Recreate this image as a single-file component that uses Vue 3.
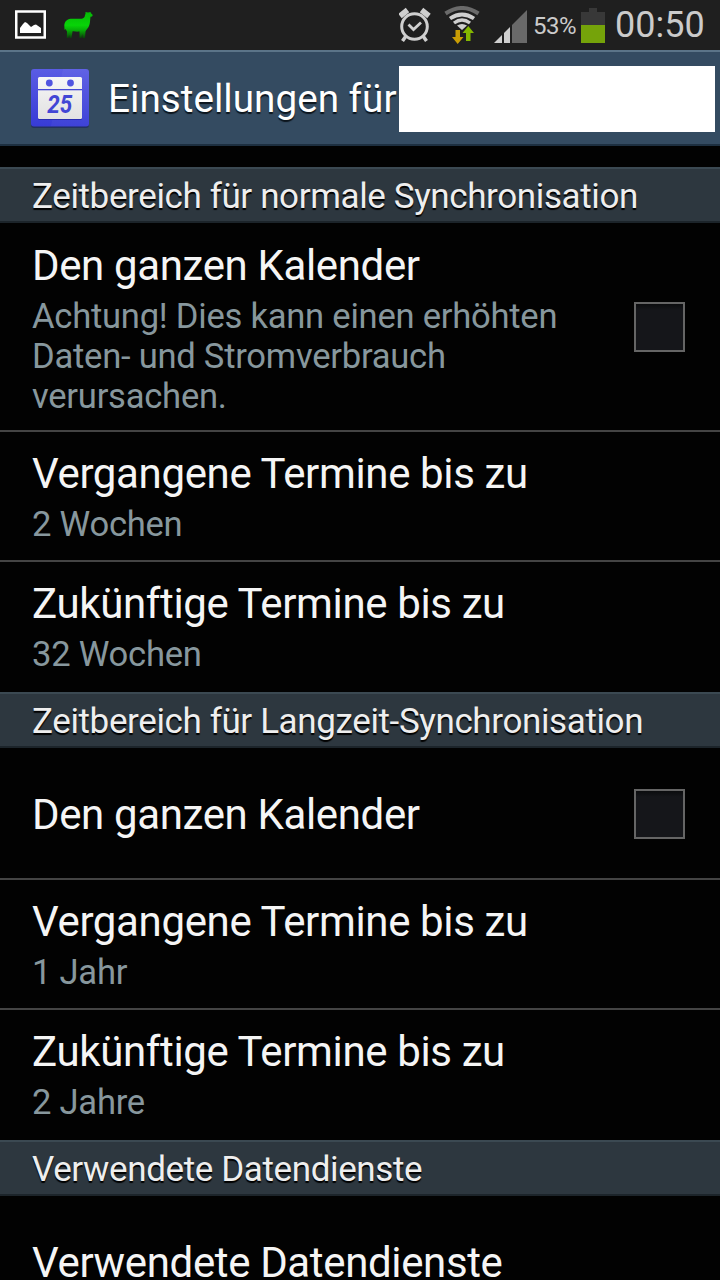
<template>
  <div class="screen">
    <div class="status-bar">
      <div class="status-left">
        <svg class="picture-icon" width="32" height="30" viewBox="0 0 32 30">
          <rect x="1.25" y="1.5" width="28.5" height="26" fill="none" stroke="#fff" stroke-width="2.5" />
          <path d="M5 23V18L8 14l2-2 2 1 4 4 3-2 2-.5 5 3.500v5z" fill="#fff" />
        </svg>
        <svg class="llama-icon" width="30" height="28" viewBox="0 0 30 28">
          <defs>
            <linearGradient id="llama" x1="0" y1="0" x2="0" y2="1">
              <stop offset="0" stop-color="#06b806" />
              <stop offset=".5" stop-color="#08d408" />
              <stop offset=".7" stop-color="#07a807" />
              <stop offset="1" stop-color="#0a3a0a" />
            </linearGradient>
          </defs>
          <path
            d="M21.500 1L24 1.500 26.500 1 27 2.200 28.800 4 28 5.500 26.500 5.800C26 8.500 26.300 12 25 15 24 17.500 22 18.500 21.500 20.500L21 27 18.500 27.500 18.300 23 17.500 27 15.500 27 15.500 20.500C12 21 10 20 8.500 20.500L7.500 27 5.500 27 5.200 24 4.500 27 2.800 27 3 20.500 1.500 18 .5 19 .3 14C1 9.500 4 7.800 8 7.800 12 7.500 17 8.500 19.500 7 21.500 5.500 20.500 4 21.500 3z"
            fill="url(#llama)"
          />
        </svg>
      </div>
      <div class="status-right">
        <svg class="alarm-icon" width="34" height="36" viewBox="0 0 34 36">
          <g fill="none" stroke="#cfcfcf">
            <circle cx="15.500" cy="19.500" r="12.800" stroke-width="3" />
            <path d="M9.500 17.500l5 5 7.500-7" stroke-width="2.800" />
            <path d="M1 9l7.500-6M30 9l-7.500-6" stroke-width="5.500" />
            <path d="M7 29l-3.500 5M24 29l3.500 5" stroke-width="3.500" />
          </g>
        </svg>
        <svg class="wifi-icon" width="36" height="38" viewBox="0 0 36 38">
          <g fill="none">
            <path d="M1.500 7.500Q18-3.500 34.500 7.500" stroke="#6a6a6a" stroke-width="4" />
            <path d="M6 12.500Q18 4.500 30 12.500" stroke="#cfcfcf" stroke-width="3.800" />
            <path d="M10 17Q18 11 26 17" stroke="#cfcfcf" stroke-width="3.400" />
          </g>
          <path d="M13 19.500q5-3 10 0L18 24z" fill="#cfcfcf" />
          <path d="M11.500 24h4.500v7h3.500L13.700 38 8 31h3.500z" fill="#c99d05" />
          <path d="M22 35h4.500v-8H30l-5.700-7L18.500 27H22z" fill="#84b800" />
        </svg>
        <svg class="signal-icon" width="33" height="34" viewBox="0 0 33 34">
          <path d="M0 33L8 25v8z" fill="#cfcfcf" />
          <path d="M10 23l6-6v16h-6z" fill="#cfcfcf" />
          <path d="M18 15L33 0v33H18z" fill="#696969" />
        </svg>
        <span class="percent">53%</span>
        <div class="battery">
          <div class="battery-cap"></div>
          <div class="battery-body">
            <div class="battery-level"></div>
          </div>
        </div>
        <span class="clock">00:50</span>
      </div>
    </div>

    <div class="action-bar">
      <svg class="app-icon" width="60" height="60" viewBox="0 0 60 60">
        <defs>
          <linearGradient id="tile" x1="0" y1="0" x2="0" y2="1">
            <stop offset="0" stop-color="#5a5ce4" />
            <stop offset="1" stop-color="#373bd6" />
          </linearGradient>
          <linearGradient id="sheet" x1="0" y1="0" x2="0" y2="1">
            <stop offset="0" stop-color="#f6f6f6" />
            <stop offset="1" stop-color="#e2e2e2" />
          </linearGradient>
        </defs>
        <rect x="1" y="1" width="58" height="58" rx="3" fill="#24325e" />
        <rect x="1" y="0" width="58" height="57.500" rx="3" fill="url(#tile)" />
        <path d="M33 0h23q3 0 3 3v54H21z" fill="#fff" opacity=".04" />
        <rect x="8" y="9" width="44" height="42" rx="1.500" fill="#292db2" />
        <rect x="8" y="8" width="44" height="42" rx="1.500" fill="url(#sheet)" />
        <rect x="8" y="20" width="44" height="1.300" fill="#4549d4" />
        <circle cx="19.300" cy="14" r="3.400" fill="#5054e0" />
        <circle cx="40.500" cy="14" r="3.400" fill="#5054e0" />
        <text x="29.800" y="44" text-anchor="middle" textLength="25" lengthAdjust="spacingAndGlyphs" class="app-day">25</text>
      </svg>
      <h1>Einstellungen für</h1>
      <div class="account"></div>
    </div>

    <div class="settings">
      <section v-for="section in sections" :key="section.title">
        <h2>{{ section.title }}</h2>
        <div
          v-for="item in section.items"
          :key="item.title"
          class="row"
          :class="{ single: !item.summary }"
        >
          <div class="texts">
            <div class="title">{{ item.title }}</div>
            <div v-if="item.summary" class="summary">{{ item.summary }}</div>
          </div>
          <button
            v-if="'checked' in item"
            class="checkbox"
            :aria-pressed="item.checked"
            @click="item.checked = !item.checked"
          >
            <svg v-if="item.checked" width="46" height="44" viewBox="0 0 46 44">
              <path d="M8 22l11 12L38 8" fill="none" stroke="#7fb800" stroke-width="6" />
            </svg>
          </button>
        </div>
      </section>
    </div>
  </div>
</template>

<script setup>
import { ref } from "vue";

const sections = ref([
  {
    title: "Zeitbereich für normale Synchronisation",
    items: [
      {
        title: "Den ganzen Kalender",
        summary: "Achtung! Dies kann einen erhöhten Daten- und Stromverbrauch verursachen.",
        checked: false,
      },
      { title: "Vergangene Termine bis zu", summary: "2 Wochen" },
      { title: "Zukünftige Termine bis zu", summary: "32 Wochen" },
    ],
  },
  {
    title: "Zeitbereich für Langzeit-Synchronisation",
    items: [
      { title: "Den ganzen Kalender", checked: false },
      { title: "Vergangene Termine bis zu", summary: "1 Jahr" },
      { title: "Zukünftige Termine bis zu", summary: "2 Jahre" },
    ],
  },
  {
    title: "Verwendete Datendienste",
    items: [{ title: "Verwendete Datendienste" }],
  },
]);
</script>

<style>
body {
  background: #000;
  overflow: hidden;
}
</style>

<style scoped>
.screen {
  width: 720px;
  height: 1280px;
  overflow: hidden;
  display: flex;
  flex-direction: column;
  background: #020202;
  color: #f5f5f5;
  font-family: Roboto, sans-serif;
}

.status-bar {
  height: 50px;
  flex: none;
  display: flex;
  justify-content: space-between;
  background: #1f1f1f;
  color: #cbcbcb;
}

.status-left,
.status-right {
  display: flex;
  align-items: flex-start;
}

.picture-icon {
  margin: 10px 0 0 15px;
}

.llama-icon {
  margin: 11px 0 0 17px;
}

.alarm-icon {
  margin: 7px -1px 0 0;
}

.wifi-icon {
  margin: 6px 0 0 12px;
}

.signal-icon {
  margin: 10px 0 0 14px;
}

.percent {
  width: 48px;
  margin-left: 6px;
  font-size: 24px;
  letter-spacing: -0.5px;
  line-height: 52px;
}

.battery {
  width: 24px;
  margin-top: 8px;
}

.battery-cap {
  width: 8px;
  height: 4px;
  margin: 0 auto;
  background: #383838;
}

.battery-body {
  height: 31px;
  display: flex;
  align-items: flex-end;
  background: #383838;
}

.battery-level {
  width: 100%;
  height: 18px;
  background: #75a30a;
}

.clock {
  width: 105px;
  margin-left: 10px;
  font-size: 36px;
  line-height: 50px;
}

.action-bar {
  height: 96px;
  flex: none;
  box-sizing: border-box;
  display: flex;
  align-items: center;
  padding: 2px 5px 0 30px;
  background: #344b61;
  border-top: 2px solid #5b7488;
  border-bottom: 2px solid #1d2f40;
}

.app-day {
  font-family: Roboto, sans-serif;
  font-size: 25px;
  font-weight: 700;
  font-style: italic;
  fill: #4246d5;
}

h1 {
  width: 291px;
  margin: 0 0 0 18px;
  font-size: 38.7px;
  font-weight: 400;
  line-height: 50px;
  white-space: nowrap;
  color: #fff;
  text-shadow: 0 2px 1px #0c151d;
}

.account {
  flex: 1;
  height: 66px;
  background: #fff;
}

.settings {
  padding-top: 21px;
}

h2 {
  height: 56px;
  box-sizing: border-box;
  margin: 0;
  padding: 1px 0 0 32px;
  border-top: 2px solid #3b4952;
  border-bottom: 2px solid #1c242a;
  background: #2d373f;
  font-size: 35px;
  font-weight: 400;
  letter-spacing: -0.38px;
  line-height: 54px;
  white-space: nowrap;
  color: #eee;
  text-shadow: 0 2px 1px #000;
}

.row {
  min-height: 130px;
  box-sizing: border-box;
  display: flex;
  align-items: center;
  padding: 18px 35px 14px 32px;
}

.row + .row {
  padding-top: 17px;
}

.row:not(:last-child) {
  border-bottom: 2px solid #444;
}

.row.single {
  min-height: 132px;
  align-items: flex-start;
  padding-top: 41px;
}

.texts {
  flex: 1;
  align-self: flex-start;
}

.title {
  font-size: 42px;
  letter-spacing: -0.36px;
  line-height: 50px;
  white-space: nowrap;
}

.single .title {
  margin-top: 1px;
}

.summary {
  width: 560px;
  margin-top: 5px;
  font-size: 34.6px;
  letter-spacing: -0.25px;
  line-height: 40px;
  color: #87979d;
}

.checkbox {
  width: 51px;
  height: 50px;
  box-sizing: border-box;
  flex: none;
  margin: 0 0 3px;
  padding: 0;
  border: 2px solid #656565;
  background: linear-gradient(#0b0c0e, #15161a 6px);
}
</style>
